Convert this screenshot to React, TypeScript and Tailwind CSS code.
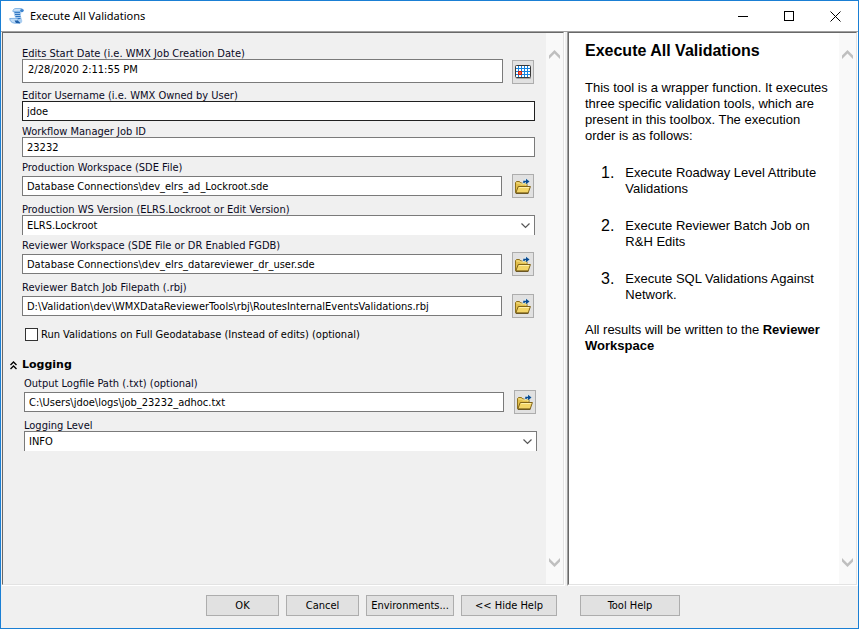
import type { ReactNode } from 'react';

const uiFont = "font-['DejaVu_Sans_Condensed','DejaVu_Sans',sans-serif]";

function ScriptIcon() {
  return (
    <svg width="16" height="16" viewBox="0 0 16 16" aria-hidden="true">
      <path d="M4.500 2.500C5 .8 6 .5 7.500 .5H13c1.400 0 2 1.500 1.300 2.500-.4.600-1 .8-1.800.7L11.800 8l1.400 4.500c.3 1.800-.7 2.800-2.200 2.800L6 14.500 7 11 5 7z" fill="#a9cdf0" />
      <path d="M3.800 3.400C4 1.400 5.200.6 7 .6h5.500l-1.200 2.600z" fill="#d3e7fa" stroke="#5f9fdc" strokeWidth=".7" />
      <circle cx="13" cy="2.600" r="1.700" fill="#3c84cf" />
      <path d="M5.500 4.600H11M6 6.500h5M6.500 8.500h5M7.500 10.500h4" stroke="#2f74c0" strokeWidth="1" />
      <path d="M.7 10.500l7.300-.2c1.300 0 1.300 1.700.4 2.600l2.600 2.300H5.500C2.500 14.800.8 13 .7 10.500z" fill="#bfdcf7" stroke="#5a9bdb" strokeWidth=".7" />
      <path d="M5.500 12.500h3.200l2.800 2.700-4.500-.2z" fill="#1d5ea8" />
    </svg>
  );
}

function FolderIcon() {
  return (
    <svg width="16" height="16" viewBox="0 0 16 16" aria-hidden="true">
      <path d="M.5 14.500v-10l1-1h3l1.200 1.500h6.300v3.500L3 14.500z" fill="#e3c04c" stroke="#8f711c" />
      <path d="M1.500 5h3l1 1h5.500v1.500" fill="none" stroke="#f7e694" />
      <path d="M3.200 8.500h12.200l-2.200 6.500H.8z" fill="#f3d567" stroke="#80641a" strokeLinejoin="round" />
      <path d="M4.200 9.500h10" stroke="#fff0a8" />
      <path d="M.8 15.300h12.600" stroke="#5a4510" />
      <path d="M7.500 5.500V3h2.300V.8h1.400L15 3.500l-3.800 3V5H9.500v1z" fill="#d5ecfa" />
      <path d="M9 5V3.500h3" fill="none" stroke="#0a4a8f" strokeWidth="1.500" />
      <path d="M11 .8l3.500 2.700L11 6.200z" fill="#0a4a8f" />
    </svg>
  );
}

function CalendarIcon() {
  return (
    <svg width="16" height="14" viewBox="0 0 16 14" aria-hidden="true">
      <rect x="1" y="1.500" width="15" height="12.500" rx="1" fill="#a8a8a8" />
      <rect x=".5" y=".5" width="15" height="12" rx="1" fill="#fff" stroke="#383838" />
      <path d="M1 3.500h14M1 6.500h14M1 9.500h14M3.500 1v11M6.500 1v11M9.500 1v11M12.500 1v11" stroke="#1383e0" />
      <rect x="3.500" y="6.500" width="3" height="3" fill="#f06a50" stroke="#cf2211" />
    </svg>
  );
}

function ScrollArrow({ down = false }: { down?: boolean }) {
  return (
    <svg width="11" height="9" viewBox="0 0 11 9" className={down ? 'rotate-180' : ''} aria-hidden="true">
      <path d="M0 5.500L5.500 0 11 5.500V9L5.500 3.600 0 9z" fill="#bfbfbf" />
    </svg>
  );
}

function ScrollBar() {
  return (
    <div className="flex w-[17px] shrink-0 flex-col items-center justify-between bg-[#f9f9f9] pt-[17px] pb-[17px]">
      <ScrollArrow />
      <ScrollArrow down />
    </div>
  );
}

function Label({ id, children }: { id: string; children: ReactNode }) {
  return (
    <label htmlFor={id} className="block h-3 leading-[13px] whitespace-nowrap text-[#0a0a1e]">
      {children}
    </label>
  );
}

function IconButton({ name, children }: { name: string; children: ReactNode }) {
  return (
    <button type="button" aria-label={name} className="flex h-6 w-[22px] shrink-0 items-center justify-center border border-[#adadad] bg-[#e1e1e1]">
      {children}
    </button>
  );
}

function TextField({ id, label, value, strong = false }: { id: string; label: string; value: string; strong?: boolean }) {
  return (
    <div>
      <Label id={id}>{label}</Label>
      <input
        id={id}
        type="text"
        defaultValue={value}
        className={`block h-5 w-full border bg-white px-1 outline-none ${strong ? 'border-[#202020]' : 'border-[#7a7a7a]'}`}
      />
    </div>
  );
}

function PathField({ id, label, value }: { id: string; label: string; value: string }) {
  return (
    <div className="pb-px">
      <Label id={id}>{label}</Label>
      <div className="flex items-center gap-[10px] pt-px pr-px">
        <input id={id} type="text" defaultValue={value} className="h-5 min-w-0 flex-1 border border-[#7a7a7a] bg-white px-1 outline-none" />
        <IconButton name={`Browse for ${label}`}>
          <FolderIcon />
        </IconButton>
      </div>
    </div>
  );
}

function SelectField({ id, label, value }: { id: string; label: string; value: string }) {
  return (
    <div>
      <Label id={id}>{label}</Label>
      <div className="relative">
        <select id={id} defaultValue={value} className="block h-5 w-full appearance-none border border-b-0 border-[#7a7a7a] bg-white px-1 pt-px outline-none">
          <option>{value}</option>
        </select>
        <svg width="9" height="6" viewBox="0 0 9 6" className="pointer-events-none absolute top-2 right-[5px]" aria-hidden="true">
          <path d="M.5 .5l4 4 4-4" fill="none" stroke="#555" strokeWidth="1.200" />
        </svg>
      </div>
    </div>
  );
}

function DialogButton({ className, children }: { className: string; children: ReactNode }) {
  return (
    <button type="button" className={`h-[21px] border border-[#adadad] bg-[#e1e1e1] leading-[19px] whitespace-nowrap ${className}`}>
      {children}
    </button>
  );
}

const steps = [
  'Execute Roadway Level Attribute Validations',
  'Execute Reviewer Batch Job on R&H Edits',
  'Execute SQL Validations Against Network.',
];

export default function App() {
  return (
    <div className={`flex min-h-screen flex-col border border-[#1a7fd4] bg-[#f0f0f0] text-[11px] text-black ${uiFont}`}>
      <header className="flex h-[30px] items-center bg-white pr-[17px] pl-2">
        <ScriptIcon />
        <h1 className="ml-[5px] flex-1 font-['Noto_Sans',sans-serif] text-[11px] leading-4">Execute All Validations</h1>
        <div className="flex items-center gap-[35px]">
          <button type="button" aria-label="Minimize">
            <svg width="11" height="11" viewBox="0 0 11 11"><path d="M0 5.500h10" stroke="#000" /></svg>
          </button>
          <button type="button" aria-label="Maximize">
            <svg width="11" height="11" viewBox="0 0 11 11"><rect x=".5" y=".5" width="9" height="9" fill="none" stroke="#000" /></svg>
          </button>
          <button type="button" aria-label="Close">
            <svg width="11" height="11" viewBox="0 0 11 11"><path d="M.5 .5l10 10M10.500 .5l-10 10" stroke="#000" strokeWidth="1" /></svg>
          </button>
        </div>
      </header>

      <div className="flex flex-1 gap-0.5 border-t border-[#a0a0a0] pl-px">
        <main className="flex min-w-0 flex-1 border-r border-r-white border-b border-b-white">
          <div className="flex min-w-0 flex-1 border border-t-[#696969] border-r-[#e3e3e3] border-b-[#e3e3e3] border-l-[#696969]">
            <form className="min-w-0 flex-1">
              <div className="flex flex-col gap-1 pt-[14px] pr-[11px] pl-[19px]">
                <div className="pb-px">
                  <Label id="start">Edits Start Date (i.e. WMX Job Creation Date)</Label>
                  <div className="flex items-start gap-[9px] pr-px">
                    <input id="start" type="text" defaultValue="2/28/2020 2:11:55 PM" className="h-6 min-w-0 flex-1 border border-[#7a7a7a] bg-white px-[5px] pb-1 outline-none" />
                    <div className="pt-px">
                      <IconButton name="Pick a date">
                        <CalendarIcon />
                      </IconButton>
                    </div>
                  </div>
                </div>
                <TextField id="editor" label="Editor Username (i.e. WMX Owned by User)" value="jdoe" strong />
                <TextField id="job" label="Workflow Manager Job ID" value="23232" />
                <PathField id="prod" label="Production Workspace (SDE File)" value="Database Connections\dev_elrs_ad_Lockroot.sde" />
                <SelectField id="version" label="Production WS Version (ELRS.Lockroot or Edit Version)" value="ELRS.Lockroot" />
                <PathField id="reviewer" label="Reviewer Workspace (SDE File or DR Enabled FGDB)" value="Database Connections\dev_elrs_datareviewer_dr_user.sde" />
                <PathField id="batch" label="Reviewer Batch Job Filepath (.rbj)" value="D:\Validation\dev\WMXDataReviewerTools\rbj\RoutesInternalEventsValidations.rbj" />
                <label className="flex items-center gap-[3px] pt-[5px] pl-[3px] leading-[13px] whitespace-nowrap">
                  <input type="checkbox" className="size-[13px] appearance-none border border-[#333] bg-white checked:bg-[#333]" />
                  Run Validations on Full Geodatabase (Instead of edits) (optional)
                </label>
              </div>

              <h2 className="mt-4 flex items-center gap-[5px] pl-[7px] font-['DejaVu_Sans',sans-serif] text-[11px] leading-4 font-bold">
                <svg width="7" height="9" viewBox="0 0 7 9" aria-hidden="true">
                  <path d="M.5 4L3.500 1l3 3M.5 8L3.500 5l3 3" fill="none" stroke="#000" strokeWidth="1.400" />
                </svg>
                Logging
              </h2>
              <div className="mt-1 flex flex-col gap-1 pr-[9px] pl-[21px]">
                <PathField id="logfile" label="Output Logfile Path (.txt) (optional)" value="C:\Users\jdoe\logs\job_23232_adhoc.txt" />
                <SelectField id="level" label="Logging Level" value="INFO" />
              </div>
            </form>
            <ScrollBar />
          </div>
        </main>

        <aside className="flex w-[291px] shrink-0 border-r border-b border-l border-r-white border-b-white border-l-[#a0a0a0]">
          <div className="flex min-w-0 flex-1 border border-t-[#696969] border-r-[#e3e3e3] border-b-[#e3e3e3] border-l-[#696969] bg-white">
            <div className="min-w-0 flex-1 pt-[9px] pr-2 pl-4 font-['Liberation_Sans',Arial,sans-serif] text-[13px] leading-4">
              <h2 className="text-base leading-[18px] font-bold">Execute All Validations</h2>
              <p className="mt-5">
                This tool is a wrapper function. It executes three specific validation tools, which are present in this toolbox. The execution order is as follows:
              </p>
              <ol className="mt-[21px] flex flex-col gap-[21px] pl-4">
                {steps.map((step, i) => (
                  <li key={step} className="flex gap-[11px]">
                    <span className="text-base leading-4">{i + 1}.</span>
                    <span>{step}</span>
                  </li>
                ))}
              </ol>
              <p className="mt-[19px]">
                All results will be written to the <b>Reviewer</b> <b>Workspace</b>
              </p>
            </div>
            <ScrollBar />
          </div>
        </aside>
      </div>

      <footer className="flex h-[42px] items-start gap-[7px] pt-[9px] pl-[205px]">
        <DialogButton className="w-[73px]">OK</DialogButton>
        <DialogButton className="w-[73px]">Cancel</DialogButton>
        <DialogButton className="w-[88px]">Environments...</DialogButton>
        <DialogButton className="w-24">&lt;&lt; Hide Help</DialogButton>
        <DialogButton className="ml-4 w-[100px]">Tool Help</DialogButton>
      </footer>
    </div>
  );
}
